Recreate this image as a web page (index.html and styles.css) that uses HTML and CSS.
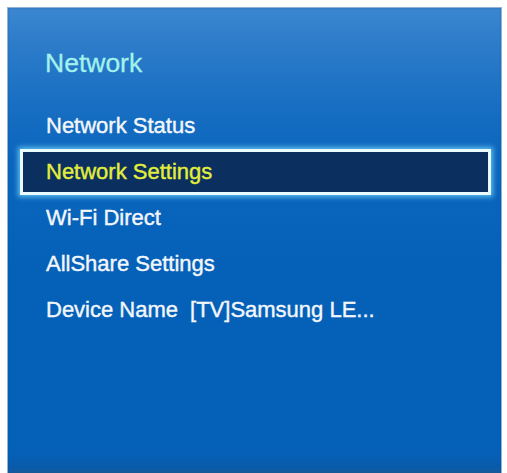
FILE: index.html
```html
<!DOCTYPE html>
<html>
<head>
<meta charset="utf-8">
<link rel="stylesheet" href="styles.css">
</head>
<body>
<div class="panel">
  <div class="title">Network</div>
  <ul class="menu">
    <li class="item">Network Status</li>
    <li class="item selected">Network Settings</li>
    <li class="item">Wi-Fi Direct</li>
    <li class="item">AllShare Settings</li>
    <li class="item">Device Name<span class="value">[TV]Samsung LE...</span></li>
  </ul>
</div>
</body>
</html>
```

FILE: styles.css
```css
html, body {
  margin: 0;
  padding: 0;
  background: #ffffff;
}
body {
  width: 507px;
  height: 473px;
  overflow: hidden;
  font-family: "Liberation Sans", Arial, sans-serif;
}
.panel {
  box-sizing: border-box;
  margin: 7px 5px 0 7px;
  width: 495px;
  height: 466px;
  padding: 40px 10px 0 12px;
  border: 1px solid #8fb4d8;
  border-bottom: none;
  background: linear-gradient(to bottom, #3b86d0 0px, #2b7bc9 40px, #1a70c3 90px, #0b66bd 150px, #0561b8 260px, #0561b8 445px, #0a5aa8 460px, #1f5e9a 466px);
  box-shadow: inset 0 0 2px rgba(20, 60, 110, 0.4);
}
.title {
  padding-left: 25px;
  font-size: 26.5px;
  line-height: 30px;
  height: 30px;
  color: #a4f1ec;
  -webkit-text-stroke: 0.3px #a4f1ec;
}
.menu {
  list-style: none;
  margin: 25px 0 0 0;
  padding: 0;
}
.item {
  box-sizing: border-box;
  height: 46px;
  line-height: 46px;
  padding-left: 26px;
  font-size: 22px;
  color: #f3f7fb;
  white-space: nowrap;
  -webkit-text-stroke: 0.4px #f3f7fb;
}
.item.selected {
  border: 3px solid #e9fbff;
  line-height: 40px;
  padding-left: 23px;
  background: #0b2f5f;
  color: #e3ee3c;
  -webkit-text-stroke: 0.4px #e3ee3c;
  box-shadow: 0 0 5px 2px rgba(120, 220, 255, 0.75);
}
.value {
  margin-left: 12px;
}
```
